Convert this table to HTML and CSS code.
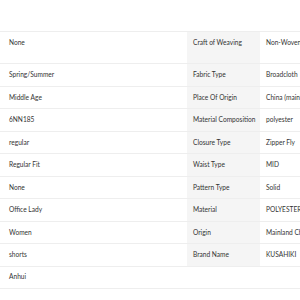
FILE: index.html
```html
<!DOCTYPE html>
<html>
<head>
<meta charset="utf-8">
<link rel="stylesheet" href="styles.css">
</head>
<body>
<div class="specs">
  <div class="row tall"><div class="val first">None</div><div class="key">Craft of Weaving</div><div class="val">Non-Woven Fabric</div></div>
  <div class="row"><div class="val first">Spring/Summer</div><div class="key">Fabric Type</div><div class="val">Broadcloth</div></div>
  <div class="row"><div class="val first">Middle Age</div><div class="key">Place Of Origin</div><div class="val">China (mainland)</div></div>
  <div class="row"><div class="val first">6NN185</div><div class="key">Material Composition</div><div class="val">polyester</div></div>
  <div class="row"><div class="val first">regular</div><div class="key">Closure Type</div><div class="val">Zipper Fly</div></div>
  <div class="row"><div class="val first">Regular Fit</div><div class="key">Waist Type</div><div class="val">MID</div></div>
  <div class="row"><div class="val first">None</div><div class="key">Pattern Type</div><div class="val">Solid</div></div>
  <div class="row"><div class="val first">Office Lady</div><div class="key">Material</div><div class="val">POLYESTER</div></div>
  <div class="row"><div class="val first">Women</div><div class="key">Origin</div><div class="val">Mainland China</div></div>
  <div class="row"><div class="val first">shorts</div><div class="key">Brand Name</div><div class="val">KUSAHIKI</div></div>
  <div class="row"><div class="val first">Anhui</div><div class="blank"></div><div class="blank"></div></div>
</div>
</body>
</html>
```

FILE: styles.css
```css
html, body {
  margin: 0;
  padding: 0;
  background: #fff;
  overflow: hidden;
}
body {
  font-family: Lato, "Liberation Sans", sans-serif;
  font-size: 6.6px;
  line-height: 9.8px;
  color: #333;
}
.specs {
  margin-top: 31px;
  width: 400px;
  border-top: 1px solid #eeeeee;
}
.row {
  display: grid;
  grid-template-columns: 187px 73px 140px;
  border-bottom: 1px solid #eeeeee;
}
.row > div {
  padding: 5.85px 6px;
  white-space: nowrap;
}
.row.tall > div {
  padding-bottom: 15.65px;
}
.row > .first {
  padding-left: 9px;
}
.key {
  background: #f5f5f5;
}
```
